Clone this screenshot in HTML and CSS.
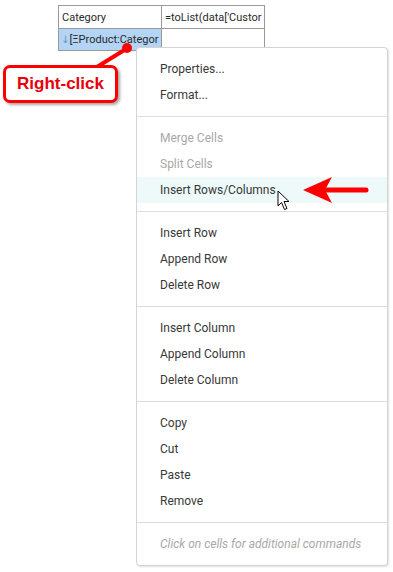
FILE: index.html
```html
<!DOCTYPE html>
<html lang="en">
<head>
  <meta charset="UTF-8">
  <title>Context Menu</title>
  <link rel="stylesheet" href="styles.css">
</head>
<body>
  <div class="canvas">
    <table class="sheet">
      <tr>
        <td>Category</td>
        <td>=toList(data['Custor</td>
      </tr>
      <tr>
        <td class="selected"><span class="down">&#8595;</span>[&Xi;Product:Categor</td>
        <td></td>
      </tr>
    </table>

    <div class="menu">
      <div class="group">
        <div class="item">Properties...</div>
        <div class="item">Format...</div>
      </div>
      <div class="group">
        <div class="item disabled">Merge Cells</div>
        <div class="item disabled">Split Cells</div>
        <div class="item hover">Insert Rows/Columns</div>
      </div>
      <div class="group">
        <div class="item">Insert Row</div>
        <div class="item">Append Row</div>
        <div class="item">Delete Row</div>
      </div>
      <div class="group">
        <div class="item">Insert Column</div>
        <div class="item">Append Column</div>
        <div class="item">Delete Column</div>
      </div>
      <div class="group">
        <div class="item">Copy</div>
        <div class="item">Cut</div>
        <div class="item">Paste</div>
        <div class="item">Remove</div>
      </div>
      <div class="group">
        <div class="item hint">Click on cells for additional commands</div>
      </div>
    </div>

    <svg class="pointer-line" width="140" height="80" viewBox="0 0 140 80">
      <line x1="92" y1="70" x2="126" y2="49" stroke="#f00" stroke-width="4" stroke-linecap="round"/>
      <circle cx="127" cy="48" r="5" fill="#f00"/>
    </svg>

    <div class="callout">Right-click</div>

    <svg class="arrow" width="80" height="40" viewBox="0 0 80 40">
      <g transform="translate(-296,-170)">
        <line x1="324" y1="190" x2="366" y2="190" stroke="#f00" stroke-width="5" stroke-linecap="round"/>
        <path d="M303,190 L332,177 L325,190 L332,203 Z" fill="#f00"/>
      </g>
    </svg>

    <svg class="cursor" width="14" height="22" viewBox="0 0 14 22">
      <path d="M1,1 L1,16 L4.5,12.5 L7.5,19.5 L10,18.5 L7,11.5 L12,11.5 Z" fill="#fff" stroke="#000" stroke-width="1" stroke-linejoin="round"/>
    </svg>
  </div>
</body>
</html>
```

FILE: styles.css
```css
body {
  margin: 0;
  background: #ffffff;
  font-family: Roboto, "Liberation Sans", sans-serif;
}

.canvas {
  position: relative;
  width: 393px;
  height: 572px;
  overflow: hidden;
}

.sheet {
  border-collapse: collapse;
  margin: 5px 0 0 58px;
  table-layout: fixed;
  width: 207px;
  font-size: 11px;
  color: #2a2a2a;
}

.sheet td {
  border: 1px solid #9a9a9a;
  height: 22px;
  padding: 0 3px;
  white-space: nowrap;
  overflow: hidden;
  width: 96px;
}

.sheet tr:last-child td {
  height: 21px;
}

.sheet td.selected {
  background: #b3d4f5;
  padding-left: 2px;
}

.down {
  font-family: "DejaVu Sans", sans-serif;
  font-size: 10px;
  color: #7090ad;
}

.menu {
  position: absolute;
  left: 136px;
  top: 47px;
  width: 250px;
  background: #fff;
  border: 1px solid #d4d4d4;
  border-radius: 4px;
  box-shadow: 1px 1px 2px rgba(0,0,0,0.12);
  font-size: 12px;
  color: #383838;
}

.group {
  padding: 8px 0;
  border-top: 1px solid #dcdcdc;
}

.group:first-child {
  border-top: none;
}

.item {
  height: 26px;
  line-height: 26px;
  padding-left: 23px;
  white-space: nowrap;
}

.item.disabled {
  color: #a8a8a8;
}

.item.hover {
  background: #eef9fa;
}

.item.hint {
  color: #a8a8a8;
  font-style: italic;
}

.pointer-line {
  position: absolute;
  left: 0;
  top: 0;
}

.callout {
  position: absolute;
  left: 3px;
  top: 65px;
  width: 109px;
  height: 32px;
  border: 3px solid #f00;
  border-radius: 7px;
  background: #fff;
  box-shadow: 2px 2px 3px rgba(0,0,0,0.35);
  color: #e8000b;
  font-family: "Liberation Sans", Arial, sans-serif;
  font-weight: bold;
  font-size: 17px;
  line-height: 32px;
  text-align: center;
}

.arrow {
  position: absolute;
  left: 296px;
  top: 170px;
}

.cursor {
  position: absolute;
  left: 277px;
  top: 190px;
}
```
